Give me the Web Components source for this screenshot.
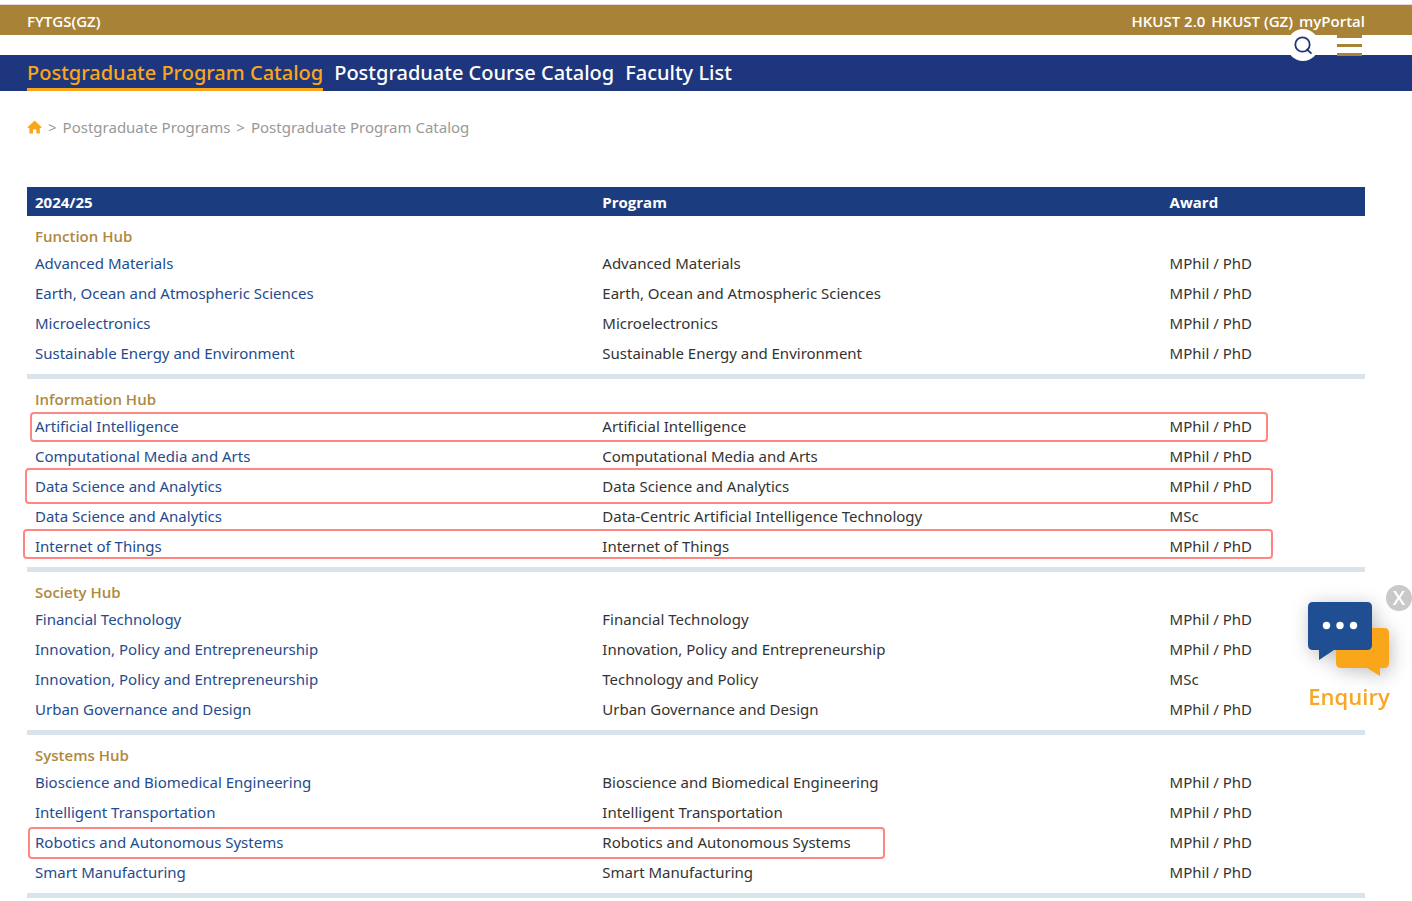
<!DOCTYPE html>
<html lang="en">
<head>
<meta charset="utf-8">
<meta name="viewport" content="width=device-width, initial-scale=1">
<title>Postgraduate Program Catalog</title>
<style>
  body {
    margin: 0;
    background: #fff;
    color: #333;
    font: 15px/24px "Noto Sans", "Open Sans", sans-serif;
    --gold: #a88337;
    --navy: #1d367d;
    --orange: #faa61a;
    --page-left: 27px;
    --page-right: 47px;
  }
</style>
</head>
<body>
<catalog-page></catalog-page>

<script>
const define = (name, html, setup) => customElements.define(name, class extends HTMLElement {
  connectedCallback() {
    if (this.shadowRoot) return;
    const root = this.attachShadow({ mode: "open" });
    root.innerHTML = html;
    if (setup) setup.call(this, root);
  }
});

define("utility-bar", `
  <style>
    :host { display: flex; justify-content: space-between; align-items: center; height: 28px;
      padding: 2px var(--page-right) 0 var(--page-left); margin-top: 4px;
      border-top: 1px solid #ddd; background: var(--gold);
      font-family: "Open Sans", sans-serif; font-weight: 600; }
    ::slotted(nav) { display: flex; gap: 6px; }
  </style>
  <slot name="start"></slot><slot name="end"></slot>`);

define("text-link", `
  <style>
    :host { display: inline; }
    a { color: inherit; text-decoration: none; }
  </style>
  <a href="#"><slot></slot></a>`);

define("header-tools", `
  <style>
    :host { display: flex; position: relative; z-index: 1; justify-content: flex-end; gap: 18px;
      height: 20px; padding-right: 50px; }
    button { display: block; padding: 0; border: 0; background: none; flex: none; }
    .search { width: 32px; height: 32px; margin-top: -6px; border-radius: 50%; background: #fff; }
    .menu { width: 25px; height: 21px; }
    svg { display: block; }
  </style>
  <button class="search" aria-label="Search">
    <svg width="32" height="32" viewBox="0 0 32 32" fill="none" stroke="#1d367d" stroke-width="1.8">
      <circle cx="15.500" cy="15.500" r="7.200"/><path d="M19.500 20l5 4.600"/>
    </svg>
  </button>
  <button class="menu" aria-label="Menu">
    <svg width="25" height="21" viewBox="0 0 25 21" fill="#a88337">
      <path d="M0 0h25v3H0zM0 9h25v3H0zM0 18h25v3H0z"/>
    </svg>
  </button>`);

define("main-nav", `
  <style>
    :host { display: block; background: var(--navy); padding-left: var(--page-left); }
    nav { display: flex; gap: 11px; }
    a { display: block; height: 33px; border-bottom: 3px solid transparent; line-height: 36px;
      font-size: 20px; font-weight: 500; color: #fff; text-decoration: none; white-space: nowrap; }
    a[aria-current] { color: var(--orange); border-color: var(--orange); }
  </style>
  <nav>
    <a href="#" aria-current="page">Postgraduate Program Catalog</a>
    <a href="#">Postgraduate Course Catalog</a>
    <a href="#">Faculty List</a>
  </nav>`);

define("bread-crumb", `
  <style>
    :host { display: block; padding: 24px var(--page-right) 48px var(--page-left); color: #999; }
    nav { display: flex; align-items: center; gap: 6px; }
    a { color: inherit; text-decoration: none; }
    svg { display: block; }
  </style>
  <nav aria-label="Breadcrumb">
    <a href="#" aria-label="Home"><svg width="15" height="14" viewBox="0 0 15 14" fill="#faa61a">
      <path d="M7.600.6L14.400 7v1h-1.600v5.400H9.400V9.600H6v3.800H2.400V8H.8V7z"/></svg></a>
    <span>&gt;</span><a href="#">Postgraduate Programs</a>
    <span>&gt;</span><a href="#">Postgraduate Program Catalog</a>
  </nav>`);

const MP = "MPhil / PhD";
/* Each program: [link, program, award, highlight inset (top right bottom left)] */
const hubs = [
  ["Function Hub", [
    ["Advanced Materials", "", MP],
    ["Earth, Ocean and Atmospheric Sciences", "", MP],
    ["Microelectronics", "", MP],
    ["Sustainable Energy and Environment", "", MP]]],
  ["Information Hub", [
    ["Artificial Intelligence", "", MP, "1px 97px -1px 3px"],
    ["Computational Media and Arts", "", MP],
    ["Data Science and Analytics", "", MP, "-3px 92px -3px -2px"],
    ["Data Science and Analytics", "Data-Centric Artificial Intelligence Technology", "MSc"],
    ["Internet of Things", "", MP, "-2px 92px 2px -4px"]]],
  ["Society Hub", [
    ["Financial Technology", "", MP],
    ["Innovation, Policy and Entrepreneurship", "", MP],
    ["Innovation, Policy and Entrepreneurship", "Technology and Policy", "MSc"],
    ["Urban Governance and Design", "", MP]]],
  ["Systems Hub", [
    ["Bioscience and Biomedical Engineering", "", MP],
    ["Intelligent Transportation", "", MP],
    ["Robotics and Autonomous Systems", "", MP, "0 480px -2px 1px"],
    ["Smart Manufacturing", "", MP]]]
];

define("program-table", `
  <style>
    :host { display: block; margin: 0 var(--page-right) 0 var(--page-left); }
    table { width: 100%; table-layout: fixed; border-collapse: separate; border-spacing: 0; }
    th, td { box-sizing: border-box; padding: 0 8px; text-align: left; vertical-align: middle; }
    th { font-family: "Open Sans", sans-serif; }
    thead th { height: 29px; padding-top: 1px; background: #1b3d80; color: #fff; font-weight: 700; }
    thead th:nth-child(-n+2) { width: 42.4%; }
    tbody th { height: 32px; padding-top: 8px; color: #b0883f; font-weight: 600; }
    td { height: 30px; }
    tr { position: relative; }
    td a { color: #1f4b8f; text-decoration: none; }
    .end td { height: 11px; border-bottom: 5px solid #dae3ea; }
    .mark { position: absolute; border: 2px solid #ff8682; border-radius: 4px; pointer-events: none; }
  </style>
  <table>
    <thead><tr><th scope="col">2024/25</th><th scope="col">Program</th><th scope="col">Award</th></tr></thead>
  </table>`, function (root) {
  const table = root.querySelector("table");
  for (const [hub, programs] of hubs) {
    const body = document.createElement("tbody");
    body.innerHTML = `<tr><th colspan="3" scope="rowgroup">${hub}</th></tr>` +
      programs.map(([link, name, award, mark]) => `<tr>
        <td><a href="#">${link}</a>${mark ? `<span class="mark" style="inset:${mark}"></span>` : ""}</td>
        <td>${name || link}</td><td>${award}</td></tr>`).join("") +
      `<tr class="end"><td colspan="3"></td></tr>`;
    table.append(body);
  }
});

define("enquiry-widget", `
  <style>
    :host { position: fixed; z-index: 2; top: 585px; right: 0; width: 126px;
      font-family: "Open Sans", sans-serif; }
    .close { position: absolute; top: 0; right: 0; width: 26px; height: 26px; padding: 0; border: 0;
      border-radius: 50%; background: #c9c9c9; color: #fff; font: 600 20px/26px "Open Sans", sans-serif; }
    a { display: flex; flex-direction: column; align-items: center; color: #f9a526;
      text-decoration: none; font-size: 22px; font-weight: 600; line-height: 30px; }
    svg { display: block; overflow: visible; }
  </style>
  <a href="#">
    <svg width="126" height="96" viewBox="0 0 126 96">
      <g style="filter:drop-shadow(2px 3px 9px rgba(0,0,0,.25))">
        <path fill="#faa61a" d="M54 43h44q5 0 5 5v30q0 5-5 5h-4v8l-13-8H55q-5 0-5-5V48z"/>
        <path fill="#1f4e92" d="M27 17h54q5 0 5 5v38q0 5-5 5H48l-15 10V65h-6q-5 0-5-5V22q0-5 5-5z"/>
      </g>
      <g fill="#fff"><circle cx="40.500" cy="40.500" r="3.700"/><circle cx="54" cy="40.500" r="3.700"/><circle cx="67.500" cy="40.500" r="3.700"/></g>
    </svg>
    <span>Enquiry</span>
  </a>
  <button class="close" aria-label="Close">X</button>`);

define("catalog-page", `
  <style>
    :host { display: block; }
    nav { color: #fff; }
  </style>
  <header>
    <utility-bar>
      <nav slot="start"><text-link>FYTGS(GZ)</text-link></nav>
      <nav slot="end"><text-link>HKUST 2.0</text-link><text-link>HKUST (GZ)</text-link><text-link>myPortal</text-link></nav>
    </utility-bar>
    <header-tools></header-tools>
    <main-nav></main-nav>
  </header>
  <main>
    <bread-crumb></bread-crumb>
    <program-table></program-table>
  </main>
  <enquiry-widget></enquiry-widget>`);
</script>
</body>
</html>
